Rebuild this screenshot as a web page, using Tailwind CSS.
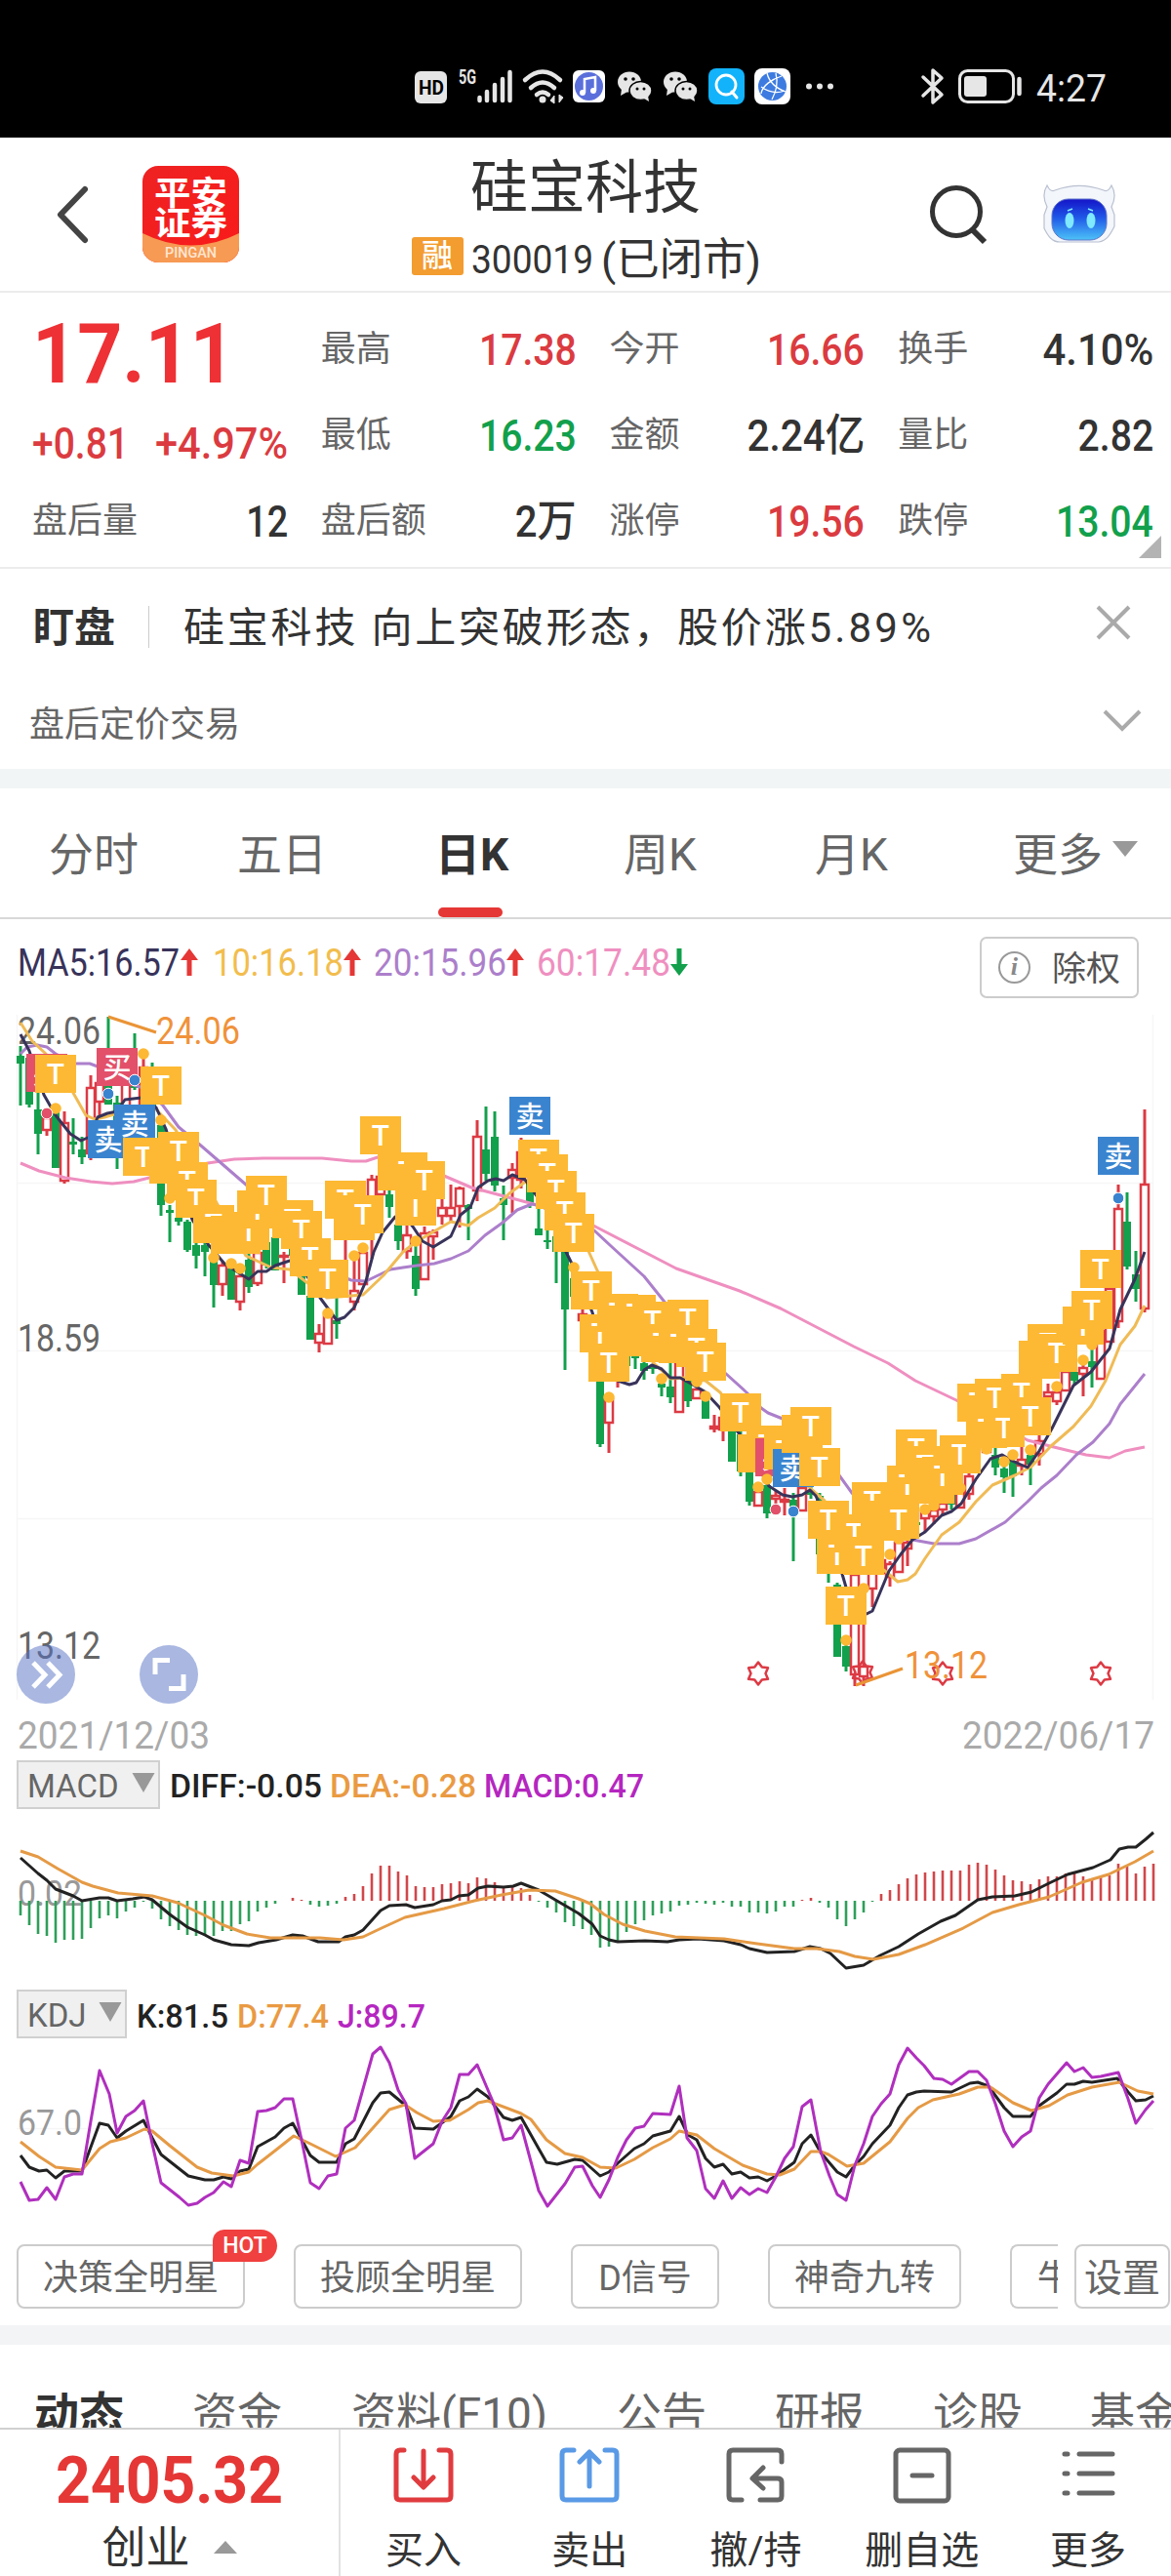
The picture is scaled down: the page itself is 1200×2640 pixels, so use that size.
<!DOCTYPE html>
<html lang="zh-CN">
<head>
    <meta charset="UTF-8">
    <meta name="viewport" content="width=device-width, initial-scale=1.0">
    <title>硅宝科技 300019</title>
    <script src="https://cdn.jsdelivr.net/npm/@tailwindcss/browser@4"></script>
</head>
<body class="bg-white text-[#333] font-['Roboto','Noto_Sans_CJK_SC',sans-serif] leading-none w-[1200px] h-[2640px] overflow-hidden flex flex-col">
    <!-- Status bar -->
    <div class="bg-black h-[141px] shrink-0">
        <svg class="block" width="1200" height="141" viewBox="0 0 1200 141" fill="none">
            <rect x="425" y="73" width="33" height="33" rx="6" fill="#e6e6e6"/>
            <text x="429" y="97" font-size="21" font-weight="700" fill="#000" textLength="26" lengthAdjust="spacingAndGlyphs">HD</text>
            <text x="470" y="86" font-size="20" font-weight="700" fill="#e6e6e6" textLength="18" lengthAdjust="spacingAndGlyphs">5G</text>
            <path d="M491.500 103v-3M499 103v-9M507 103v-16M515 103v-22M522.500 103v-29" stroke="#e6e6e6" stroke-width="4.500" stroke-linecap="round"/>
            <path d="M538 82q18 -17 36 0M544 90q12 -11 24 0M550 97q6 -5 12 0" stroke="#e6e6e6" stroke-width="4.500" stroke-linecap="round"/>
            <circle cx="556" cy="102" r="3.500" fill="#e6e6e6"/>
            <path d="M568 106v-8l-4 5zM573 97v8l4-5z" fill="#e6e6e6" stroke="#e6e6e6"/>
            <rect x="587" y="72" width="33" height="33" rx="6" fill="#fff"/>
            <circle cx="603.500" cy="88.500" r="14.500" fill="#5b6fdb"/>
            <path d="M599 95V81l11-2v14" stroke="#fff" stroke-width="2.500"/>
            <circle cx="597" cy="95" r="3" fill="#fff"/><circle cx="608" cy="93" r="3" fill="#fff"/>
            <g id="chat">
                <ellipse cx="645" cy="84" rx="12" ry="10.500" fill="#e6e6e6"/>
                <path d="M637 91l-1 7 7-4z" fill="#e6e6e6"/>
                <circle cx="641" cy="81" r="1.800" fill="#000"/><circle cx="649" cy="81" r="1.800" fill="#000"/>
                <ellipse cx="656.500" cy="93" rx="11.500" ry="9.500" fill="#e6e6e6" stroke="#000" stroke-width="1.500"/>
                <path d="M660 101l5 3-1-6z" fill="#e6e6e6"/>
                <circle cx="653" cy="91" r="1.500" fill="#000"/><circle cx="660" cy="91" r="1.500" fill="#000"/>
            </g>
            <use href="#chat" x="47"/>
            <rect x="726" y="70" width="37" height="37" rx="8" fill="#12b3fb"/>
            <circle cx="744" cy="87" r="10" stroke="#fff" stroke-width="2.800"/>
            <path d="M750 94l5 6" stroke="#fff" stroke-width="3" stroke-linecap="round"/>
            <rect x="773" y="70" width="37" height="37" rx="8" fill="#fff"/>
            <circle cx="791.500" cy="88.500" r="14.500" fill="#3d7be0"/>
            <path d="M786 75c2 8 8 15 19 19M801 78c-10 3-20 10-21 18M780 89c7 5 16 7 24 4M795 75c2 8 1 18-4 27" stroke="#fff" stroke-width="1.300"/>
            <circle cx="829" cy="88.500" r="3" fill="#e6e6e6"/><circle cx="840" cy="88.500" r="3" fill="#e6e6e6"/><circle cx="851" cy="88.500" r="3" fill="#e6e6e6"/>
            <path d="M946 79l19 18-9 8V72l9 8-19 18" stroke="#e6e6e6" stroke-width="3.500" stroke-linejoin="round" stroke-linecap="round"/>
            <rect x="983.500" y="72.500" width="55" height="32" rx="8" stroke="#e6e6e6" stroke-width="3"/>
            <rect x="988" y="78" width="23" height="21" rx="3" fill="#e6e6e6"/>
            <path d="M1044.500 81v15" stroke="#e6e6e6" stroke-width="4.500" stroke-linecap="round"/>
            <text x="1062" y="104" font-size="39" fill="#e6e6e6" textLength="72" lengthAdjust="spacingAndGlyphs">4:27</text>
        </svg>
    </div>

    <!-- Header -->
    <header class="h-[159px] shrink-0 border-b-2 border-[#ececec] flex items-center relative">
        <svg class="ml-[54px]" width="40" height="66" viewBox="0 0 40 66" fill="none"><path d="M33 7L8 33l25 26" stroke="#444" stroke-width="6" stroke-linecap="round" stroke-linejoin="round"/></svg>
        <div class="ml-[52px] w-[99px] h-[99px] rounded-[16px] overflow-hidden bg-gradient-to-br from-[#ee2222] to-[#fa1a1a] relative text-white text-center">
            <svg class="absolute inset-0" width="99" height="99" viewBox="0 0 99 99"><path d="M0 69Q50 94 99 69V99H0z" fill="#f79a53"/></svg>
            <svg class="relative block" width="99" height="99" viewBox="0 0 99 99" fill="#fff" font-weight="700">
                <text x="12" y="40" font-size="34" textLength="75" lengthAdjust="spacingAndGlyphs">平安</text>
                <text x="12" y="71" font-size="34" textLength="75" lengthAdjust="spacingAndGlyphs">证券</text>
                <text x="23" y="94" font-size="14" font-weight="500" fill="#ffe6d2" textLength="53" lengthAdjust="spacingAndGlyphs">PINGAN</text>
            </svg>
        </div>
        <div class="absolute inset-x-0 top-0 flex flex-col items-center pointer-events-none">
            <h1 class="mt-[20px] text-[59px] leading-[64px]">硅宝科技</h1>
            <div class="mt-[14px] flex items-center h-[46px]">
                <span class="w-[53px] h-[39px] rounded-[3px] bg-[#f39c2f] text-white text-[32px] leading-[39px] font-medium text-center">融</span>
                <svg class="ml-2 overflow-visible" width="296" height="46" viewBox="484 238 296 46" fill="#333">
                    <text x="484" y="279" font-size="40" textLength="125" lengthAdjust="spacingAndGlyphs">300019</text>
                    <text x="617" y="281" font-size="45" textLength="164" lengthAdjust="spacingAndGlyphs">(已闭市)</text>
                </svg>
            </div>
        </div>
        <div class="ml-auto flex items-center">
            <svg width="64" height="64" viewBox="0 0 64 64" fill="none"><circle cx="30" cy="29" r="24.500" stroke="#333" stroke-width="5"/><path d="M47 48l12 12" stroke="#333" stroke-width="6"/></svg>
            <svg class="ml-[54px] mr-[56px]" width="76" height="64" viewBox="0 0 76 64">
                <defs><linearGradient id="face" x1="0" y1="0" x2="0" y2="1"><stop offset="0" stop-color="#1414c8"/><stop offset=".45" stop-color="#1f57e8"/><stop offset="1" stop-color="#4cc3f7"/></linearGradient></defs>
                <path d="M5 2c2 4 4 7 8 5 16-6 34-6 50 0 4 2 6-1 8-5 5 8 3 16 0 22l3 8v12c-4 8-8 15-16 16H18C10 60 6 54 2 46V32l3-8C2 18 0 10 5 2z" fill="#f3f6fb" stroke="#b9c0d0" stroke-width="1.200"/>
                <rect x="10" y="16" width="56" height="42" rx="17" fill="url(#face)" stroke="#5f74c9"/>
                <ellipse cx="28" cy="38" rx="4.500" ry="8" fill="#7fe9ff"/><ellipse cx="50" cy="38" rx="4.500" ry="8" fill="#7fe9ff"/>
                <path d="M26 28l5-2M52 28l-5-2" stroke="#7fe9ff" stroke-width="1.500"/>
            </svg>
        </div>
    </header>

    <!-- Quote -->
    <section class="h-[283px] shrink-0 border-b-2 border-[#ececec] pt-[14px] pl-[33px] pr-[18px] grid grid-cols-4 gap-x-[34px] relative text-[36px] text-[#666]">
        <div>
            <svg class="block overflow-visible" width="262" height="176" viewBox="33 314 262 176" font-weight="500">
                <text x="33" y="392" font-size="86" font-weight="700" fill="#ee3135" textLength="208" lengthAdjust="spacingAndGlyphs">17.11</text>
                <g font-size="45" fill="#db3b40">
                    <text x="33" y="470" textLength="99" lengthAdjust="spacingAndGlyphs">+0.81</text>
                    <text x="159" y="470" textLength="136" lengthAdjust="spacingAndGlyphs">+4.97%</text>
                </g>
            </svg>
            <div class="h-[88px] flex items-center justify-between"><span>盘后量</span><b class="font-medium text-[45px] text-[#333] origin-right scale-x-[.84]">12</b></div>
        </div>
        <div>
            <div class="h-[88px] flex items-center justify-between"><span>最高</span><b class="font-medium text-[45px] text-[#db3b40] origin-right scale-x-[.87]">17.38</b></div>
            <div class="h-[88px] flex items-center justify-between"><span>最低</span><b class="font-medium text-[45px] text-[#12a04c] origin-right scale-x-[.87]">16.23</b></div>
            <div class="h-[88px] flex items-center justify-between"><span>盘后额</span><b class="font-medium text-[45px] text-[#333] origin-right scale-x-[.89]">2万</b></div>
        </div>
        <div>
            <div class="h-[88px] flex items-center justify-between"><span>今开</span><b class="font-medium text-[45px] text-[#db3b40] origin-right scale-x-[.87]">16.66</b></div>
            <div class="h-[88px] flex items-center justify-between"><span>金额</span><b class="font-medium text-[45px] text-[#333] origin-right scale-x-[.9]">2.24亿</b></div>
            <div class="h-[88px] flex items-center justify-between"><span>涨停</span><b class="font-medium text-[45px] text-[#db3b40] origin-right scale-x-[.87]">19.56</b></div>
        </div>
        <div>
            <div class="h-[88px] flex items-center justify-between"><span>换手</span><b class="font-medium text-[45px] text-[#333] origin-right scale-x-[.93]">4.10%</b></div>
            <div class="h-[88px] flex items-center justify-between"><span>量比</span><b class="font-medium text-[45px] text-[#333] origin-right scale-x-[.87]">2.82</b></div>
            <div class="h-[88px] flex items-center justify-between"><span>跌停</span><b class="font-medium text-[45px] text-[#12a04c] origin-right scale-x-[.87]">13.04</b></div>
        </div>
        <svg class="absolute right-[10px] bottom-[9px]" width="23" height="23" viewBox="0 0 23 23"><path d="M23 0v23H0z" fill="#b3b3b3"/></svg>
    </section>

    <!-- Alert -->
    <section class="h-[205px] shrink-0">
        <div class="h-[122px] pl-[34px] pr-[39px] flex items-center">
            <b class="text-[42px] font-bold">盯盘</b>
            <i class="ml-[34px] mb-1 w-px h-[43px] bg-[#ccc]"></i>
            <span class="ml-[35px] text-[42px] tracking-[2.8px] whitespace-nowrap">硅宝科技 向上突破形态，股价涨<span class="tracking-[3.200px]">5.89%</span></span>
            <svg class="ml-auto mb-[12px]" width="40" height="40" viewBox="0 0 40 40"><path d="M4 4l32 32M36 4L4 36" stroke="#aaa" stroke-width="4"/></svg>
        </div>
        <div class="h-[76px] pl-[30px] pr-[28px] flex items-center justify-between text-[36px] text-[#666]">
            <span>盘后定价交易</span>
            <svg class="mb-2" width="44" height="28" viewBox="0 0 44 28" fill="none"><path d="M4 4l18 18L40 4" stroke="#aaa" stroke-width="4"/></svg>
        </div>
    </section>
    <div class="h-5 shrink-0 bg-[#f2f5f6]"></div>

    <!-- Period tabs -->
    <nav class="h-[134px] shrink-0 border-b-2 border-[#d8d8d8] flex items-center text-[46px] text-[#666] pl-[50px] pt-1">
        <a class="w-[193px]">分时</a>
        <a class="w-[203px]">五日</a>
        <a class="w-[193px] h-full flex items-center font-bold text-[#333] relative">日K<i class="absolute left-[3px] bottom-0 w-[66px] h-[10px] rounded-[5px] bg-[#e53735]"></i></a>
        <a class="w-[196px]">周K</a>
        <a class="w-[203px]">月K</a>
        <a class="flex items-center">更多<svg class="ml-[10px] mb-3" width="26" height="16" viewBox="0 0 26 16"><path d="M0 0h26L13 16z" fill="#999"/></svg></a>
    </nav>

    <!-- Moving averages -->
    <div class="h-[94px] shrink-0 flex items-start">
        <svg class="block" width="720" height="94" viewBox="0 942 720 94" font-size="38">
            <text x="18" y="1000" fill="#38335a" textLength="166" lengthAdjust="spacingAndGlyphs">MA5:16.57</text>
            <text x="218" y="1000" fill="#f2bd4d" textLength="134" lengthAdjust="spacingAndGlyphs">10:16.18</text>
            <text x="383" y="1000" fill="#ac7fcb" textLength="136" lengthAdjust="spacingAndGlyphs">20:15.96</text>
            <text x="550" y="1000" fill="#ef8fc0" textLength="137" lengthAdjust="spacingAndGlyphs">60:17.48</text>
            <g fill="#e53735">
                <path id="up" d="M194 972l9 12h-6.500v16h-5v-16H185z"/>
                <use href="#up" x="167"/>
                <use href="#up" x="334"/>
            </g>
            <path d="M696 1000l9-12h-6.500v-16h-5v16H687z" fill="#12a04c"/>
        </svg>
        <div class="ml-[284px] mt-[18px] w-[163px] h-[63px] border-2 border-[#ccc] rounded-[7px] pt-[3px] flex items-center justify-center gap-[22px] text-[35px] text-[#555]">
            <span class="w-[33px] h-[33px] mb-1 rounded-full border-2 border-[#999] text-[#888] font-['Liberation_Serif',serif] italic font-bold text-[26px] flex items-center justify-center">i</span>除权
        </div>
    </div>

    <!-- Candles -->
    <div class="h-[710px] shrink-0">
        <svg id="kline" class="block" width="1200" height="710" viewBox="0 1036 1200 710" fill="none">
            <path d="M17.500 1040V1742M1181.500 1040V1742M17 1212.500H1181M17 1384.500H1181M17 1556.500H1181" stroke="#f6f6f6" stroke-width="1.500"/>
            <g font-size="38" fill="#666">
                <text x="18" y="1070" textLength="85" lengthAdjust="spacingAndGlyphs">24.06</text>
                <text x="18" y="1385" textLength="85" lengthAdjust="spacingAndGlyphs">18.59</text>
                <text x="18" y="1700" textLength="85" lengthAdjust="spacingAndGlyphs">13.12</text>
            </g>
            <g id="candles"></g>
            <g id="averages" stroke-width="3" stroke-linejoin="round"></g>
            <g id="stars" stroke="#dc3a44" stroke-width="2.500" stroke-linejoin="round"></g>
            <path d="M111 1042L160 1058M877 1727L925 1710" stroke="#ea9436" stroke-width="3"/>
            <g font-size="38" fill="#f0923a">
                <text x="160" y="1070" textLength="86" lengthAdjust="spacingAndGlyphs">24.06</text>
                <text x="927" y="1720" textLength="85" lengthAdjust="spacingAndGlyphs">13.12</text>
            </g>
            <g id="flags" fill="#fff" text-anchor="middle" font-weight="500"></g>
            <g id="dots"></g>
            <g fill="#5470c4" fill-opacity=".5"><circle cx="47" cy="1716" r="30"/><circle cx="173" cy="1716" r="30"/></g>
            <path d="M34 1704l12 12.500-12 12.500M49 1704l12 12.500-12 12.500M159 1716v-14.500h15M173 1730.500h15V1716" stroke="#fff" stroke-width="5"/>
        </svg>
    </div>
    <div class="h-[58px] shrink-0">
        <svg class="block" width="1200" height="58" viewBox="0 1746 1200 58" font-size="39" fill="#aaa">
            <text x="18" y="1792" textLength="197" lengthAdjust="spacingAndGlyphs">2021/12/03</text>
            <text x="986" y="1792" textLength="197" lengthAdjust="spacingAndGlyphs">2022/06/17</text>
        </svg>
    </div>

    <!-- MACD -->
    <div class="h-[50px] shrink-0 pl-[17px] flex">
        <div class="w-[147px] h-[50px] bg-[#f0f0f0] border-2 border-[#d0d0d0] flex items-center justify-between pl-[9px] pr-[3px] text-[#666]">
            <span class="text-[33px] pt-[3px]">MACD</span><svg class="mb-1" width="24" height="20" viewBox="0 0 23 20"><path d="M0 0h23L11.500 20z" fill="#999"/></svg>
        </div>
        <svg class="block" width="520" height="50" viewBox="164 1804 520 50" font-size="33" font-weight="500">
            <text x="174" y="1842" fill="#222" textLength="156" lengthAdjust="spacingAndGlyphs">DIFF:-0.05</text>
            <text x="338" y="1842" fill="#ea9a42" textLength="150" lengthAdjust="spacingAndGlyphs">DEA:-0.28</text>
            <text x="496" y="1842" fill="#b526c0" textLength="164" lengthAdjust="spacingAndGlyphs">MACD:0.47</text>
        </svg>
    </div>
    <div class="h-[185px] shrink-0">
        <svg class="block" width="1200" height="185" viewBox="0 1854 1200 185" fill="none" stroke-width="3" stroke-linejoin="round">
            <text x="18" y="1953" font-size="37" fill="#999" stroke="none" textLength="66" lengthAdjust="spacingAndGlyphs">0.02</text>
            <g id="macdBars" stroke-width="2.600"></g>
            <polyline stroke="#222" points="21,1904 39,1920 48,1927 57,1936 75,1943 84,1948 102,1945 111,1945 120,1948 136,1946 148,1944 156,1947 174,1962 192,1975 210,1983 219,1988 237,1993 255,1994 265,1991 283,1988 300,1983 310,1984 326,1990 347,1990 354,1985 363,1983 372,1978 390,1958 399,1953 416,1952 425,1955 444,1952 453,1948 462,1947 470,1943 480,1942 490,1935 500,1933 516,1934 526,1933 534,1930 552,1937 569,1947 593,1961 607,1972 615,1984 624,1988 633,1990 661,1989 684,1990 696,1988 715,1987 742,1989 759,1993 768,1997 786,2001 814,2000 830,1995 841,1997 851,2002 867,2017 885,2014 902,2004 921,1995 941,1982 964,1969 979,1963 1002,1947 1017,1944 1040,1943 1057,1939 1075,1930 1094,1921 1120,1914 1138,1906 1147,1895 1156,1893 1164,1893 1174,1885 1182,1878"/>
            <polyline stroke="#e59a45" points="21,1897 39,1903 59,1915 84,1929 95,1933 121,1940 156,1943 182,1950 210,1963 229,1973 253,1982 277,1986 328,1986 352,1988 372,1985 391,1976 415,1965 455,1956 486,1948 514,1942 542,1937 569,1938 593,1946 605,1951 619,1962 638,1972 661,1979 692,1985 742,1987 776,1992 814,1997 837,1997 860,2000 876,2005 895,2008 921,2003 948,1993 987,1976 1017,1960 1044,1952 1075,1944 1109,1929 1136,1921 1163,1908 1182,1897"/>
        </svg>
    </div>

    <!-- KDJ -->
    <div class="h-[50px] shrink-0 pl-[17px] flex">
        <div class="w-[113px] h-[50px] bg-[#f0f0f0] border-2 border-[#d0d0d0] flex items-center justify-between pl-[9px] pr-[3px] text-[#666]">
            <span class="text-[33px] pt-[3px]">KDJ</span><svg class="mb-1" width="24" height="20" viewBox="0 0 23 20"><path d="M0 0h23L11.500 20z" fill="#999"/></svg>
        </div>
        <svg class="block" width="320" height="50" viewBox="130 2039 320 50" font-size="33" font-weight="500">
            <text x="140" y="2078" fill="#222" textLength="94" lengthAdjust="spacingAndGlyphs">K:81.5</text>
            <text x="243" y="2078" fill="#ea9a42" textLength="94" lengthAdjust="spacingAndGlyphs">D:77.4</text>
            <text x="346" y="2078" fill="#b526c0" textLength="90" lengthAdjust="spacingAndGlyphs">J:89.7</text>
        </svg>
    </div>
    <div class="h-[190px] shrink-0">
        <svg class="block" width="1200" height="190" viewBox="0 2089 1200 190" fill="none" stroke-width="3" stroke-linejoin="round">
            <path d="M17 2181.500H1182" stroke="#f6f6f6" stroke-width="1.500"/>
            <text x="18" y="2188" font-size="37" fill="#999" stroke="none" textLength="66" lengthAdjust="spacingAndGlyphs">67.0</text>
            <polyline stroke="#222" points="21,2209 30,2221 40,2225 48,2224 57,2232 66,2225 84,2225 95,2195 102,2176 111,2178 120,2191 129,2184 147,2173 156,2191 165,2208 193,2230 210,2234 219,2234 229,2231 237,2233 246,2225 255,2223 264,2200 282,2190 291,2181 300,2176 318,2209 327,2216 345,2216 354,2197 363,2192 382,2155 390,2145 399,2144 416,2158 425,2181 444,2182 462,2169 471,2153 480,2149 489,2141 500,2149 516,2170 525,2173 534,2170 552,2202 560,2216 571,2218 589,2213 597,2214 615,2230 624,2226 633,2217 650,2202 660,2197 669,2189 687,2184 696,2169 705,2188 714,2193 723,2212 732,2221 741,2218 750,2228 759,2226 768,2232 777,2231 786,2235 795,2230 814,2216 822,2197 831,2188 841,2206 858,2226 867,2231 876,2219 885,2210 894,2197 912,2178 921,2160 930,2147 939,2144 947,2143 975,2144 994,2135 1002,2134 1013,2138 1029,2160 1038,2169 1056,2169 1065,2158 1083,2145 1093,2136 1101,2136 1110,2133 1119,2134 1145,2130 1156,2144 1164,2153 1174,2152 1182,2148"/>
            <polyline stroke="#e59a45" points="21,2195 40,2210 57,2221 84,2224 102,2202 113,2195 129,2191 148,2182 156,2184 174,2199 202,2221 217,2227 239,2230 255,2226 264,2218 282,2204 301,2189 316,2196 344,2210 364,2201 382,2181 399,2162 415,2157 427,2165 444,2174 461,2173 480,2162 490,2155 500,2153 534,2166 544,2172 560,2193 579,2207 597,2211 615,2221 631,2222 650,2213 669,2201 687,2192 696,2184 714,2188 732,2202 761,2219 786,2228 799,2229 814,2223 831,2205 841,2205 849,2208 868,2220 885,2217 912,2195 930,2171 941,2160 956,2152 983,2146 1002,2139 1015,2139 1038,2155 1057,2163 1075,2158 1094,2147 1119,2139 1147,2134 1166,2143 1182,2146"/>
            <polyline stroke="#b02fbe" points="21,2236 30,2255 39,2254 48,2242 57,2254 66,2231 75,2228 84,2228 93,2174 102,2122 112,2146 120,2186 129,2169 138,2163 147,2153 156,2197 165,2237 184,2252 193,2260 202,2258 210,2252 219,2247 229,2236 237,2241 246,2214 255,2217 264,2164 273,2163 282,2160 291,2151 300,2151 309,2193 318,2237 327,2243 336,2230 345,2228 354,2181 363,2173 382,2105 390,2098 399,2114 408,2142 416,2156 425,2212 444,2197 453,2174 462,2160 471,2126 480,2126 489,2116 506,2156 516,2193 525,2191 534,2178 552,2245 561,2261 579,2238 589,2221 597,2220 607,2240 615,2252 624,2234 633,2211 642,2193 651,2181 660,2179 669,2166 687,2167 696,2138 704,2191 714,2204 723,2243 732,2253 741,2235 750,2253 759,2242 768,2249 777,2243 786,2247 795,2231 804,2212 813,2200 822,2159 831,2152 841,2205 850,2230 858,2249 867,2255 876,2219 885,2197 894,2169 903,2156 912,2146 921,2116 930,2099 939,2109 947,2117 957,2130 966,2131 975,2136 993,2123 1002,2123 1011,2132 1020,2156 1029,2184 1038,2200 1047,2190 1056,2184 1065,2150 1074,2136 1093,2114 1101,2123 1110,2119 1119,2129 1128,2128 1146,2124 1156,2151 1164,2176 1174,2162 1182,2153"/>
        </svg>
    </div>

    <!-- Strategy buttons -->
    <div class="h-[104px] shrink-0 pt-[21px] pl-[17px] flex text-[36px] text-[#666] whitespace-nowrap">
        <div class="w-[1067px] flex gap-[50px]">
            <div class="w-[234px] h-[66px] shrink-0 border-2 border-[#ccc] rounded-[8px] pt-1 flex items-center justify-center relative">决策全明星
                <span class="absolute left-[199px] -top-[17px] w-[66px] h-[33px] bg-[#f0403f] rounded-[17px] rounded-bl-none rounded-tl-[12px] text-white text-[23px] font-medium flex items-center justify-center">HOT</span>
            </div>
            <div class="w-[234px] h-[66px] shrink-0 border-2 border-[#ccc] rounded-[8px] pt-1 flex items-center justify-center">投顾全明星</div>
            <div class="w-[152px] h-[66px] shrink-0 border-2 border-[#ccc] rounded-[8px] pt-1 flex items-center justify-center">D信号</div>
            <div class="w-[198px] h-[66px] shrink-0 border-2 border-[#ccc] rounded-[8px] pt-1 flex items-center justify-center">神奇九转</div>
            <div class="w-[49px] h-[66px] shrink-0 border-2 border-r-0 border-[#ccc] rounded-l-[8px] pt-1 flex items-center pl-[26px] overflow-hidden">牛</div>
        </div>
        <div class="ml-[17px] w-[98px] h-[66px] border-2 border-[#ccc] rounded-[8px] pt-1 flex items-center justify-center text-[39px]">设置</div>
    </div>
    <div class="h-5 shrink-0 bg-[#f2f4f6]"></div>

    <!-- News tabs -->
    <nav class="h-[85px] shrink-0 overflow-hidden pt-[48px] pl-[35px] flex text-[46px] text-[#666] whitespace-nowrap">
        <a class="w-[162px] shrink-0 font-bold text-[#333]">动态</a>
        <a class="w-[163px] shrink-0">资金</a>
        <a class="w-[272px] shrink-0">资料(F10)</a>
        <a class="w-[162px] shrink-0">公告</a>
        <a class="w-[162px] shrink-0">研报</a>
        <a class="w-[161px] shrink-0">诊股</a>
        <a class="shrink-0">基金</a>
    </nav>

    <!-- Trade bar -->
    <footer class="h-[152px] shrink-0 bg-white border-t-2 border-[#d0d0d0] flex text-[39px]">
        <div class="w-[349px] border-r-2 border-[#e2e2e2] flex flex-col items-center">
            <svg class="block" width="347" height="92" viewBox="0 2490 347 92"><text x="57" y="2565" font-size="66" font-weight="700" fill="#e53735" textLength="233" lengthAdjust="spacingAndGlyphs">2405.32</text></svg>
            <div class="mt-[7px] flex items-center text-[45px] leading-[46px]">创业<svg class="ml-[24px] mb-1" width="24" height="13" viewBox="0 0 24 13"><path d="M12 0l12 13H0z" fill="#999"/></svg></div>
        </div>
        <div class="flex-1 grid grid-cols-5 text-center">
            <div class="flex flex-col items-center">
                <svg class="mt-[15px]" width="66" height="62" viewBox="0 0 66 62" fill="none" stroke="#e03c3f" stroke-width="5" stroke-linecap="round" stroke-linejoin="round"><path d="M13 6H9q-4 0-4 4v43q0 4 4 4h48q4 0 4-4V10q0-4-4-4h-8M33 7v35M23 34l10 10 10-10"/></svg>
                <span class="mt-[28px]">买入</span>
            </div>
            <div class="flex flex-col items-center">
                <svg class="mt-[15px]" width="66" height="62" viewBox="0 0 66 62" fill="none" stroke="#5a9ae6" stroke-width="5" stroke-linecap="round" stroke-linejoin="round"><path d="M17 6H9q-4 0-4 4v43q0 4 4 4h48q4 0 4-4V10q0-4-4-4h-8M33 43V8M23 18L33 8l10 10"/></svg>
                <span class="mt-[28px]">卖出</span>
            </div>
            <div class="flex flex-col items-center">
                <svg class="mt-[15px]" width="66" height="62" viewBox="0 0 66 62" fill="none" stroke="#666" stroke-width="5" stroke-linecap="round" stroke-linejoin="round"><path d="M19 57H10q-4 0-4-4V10q0-4 4-4h46q4 0 4 4v8M38 57h18q4 0 4-4V39q0-4-4-4H31M41 24L30 35l11 10"/></svg>
                <span class="mt-[28px]">撤/持</span>
            </div>
            <div class="flex flex-col items-center">
                <svg class="mt-[15px]" width="66" height="62" viewBox="0 0 66 62" fill="none" stroke="#666" stroke-width="5" stroke-linecap="round"><rect x="6" y="6" width="54" height="52" rx="4"/><path d="M23 32h20"/></svg>
                <span class="mt-[28px]">删自选</span>
            </div>
            <div class="flex flex-col items-center">
                <svg class="mt-[15px]" width="66" height="62" viewBox="0 0 66 62" fill="none" stroke="#666" stroke-width="5" stroke-linecap="round"><path d="M9 10h3M24 10h34M9 30h3M24 30h34M9 50h3M24 50h34"/></svg>
                <span class="mt-[28px]">更多</span>
            </div>
        </div>
    </footer>

    <script>
        const RED = '#dc3a44', GREEN = '#12a04c';

        // one row per day: colour, high, body top, body bottom, low
        const candles = [
            ['g',1072,1082,1090,1133],['g',1080,1084,1132,1135],['g',1120,1137,1162,1183],['r',1135,1145,1159,1164],['g',1131,1132,1197,1197],
            ['r',1139,1150,1211,1213],['g',1146,1170,1173,1183],['g',1165,1178,1186,1193],['r',1102,1114,1183,1189],['r',1100,1109,1130,1145],
            ['g',1042,1077,1132,1132],['g',1123,1130,1180,1198],['r',1100,1110,1153,1153],['g',1059,1103,1115,1117],['r',1083,1093,1137,1140],
            ['g',1089,1100,1133,1133],['g',1150,1153,1235,1246],['g',1235,1240,1243,1273],['g',1245,1248,1252,1256],['g',1250,1252,1281,1283],
            ['g',1273,1276,1287,1300],['g',1273,1276,1283,1308],['g',1290,1293,1317,1340],['r',1293,1296,1317,1328],['g',1298,1300,1332,1332],
            ['r',1305,1307,1335,1343],['g',1285,1291,1319,1325],['r',1270,1283,1316,1318],['g',1265,1273,1297,1300],['g',1267,1268,1302,1302],
            ['r',1283,1286,1289,1315],['g',1280,1280,1287,1287],['g',1300,1307,1327,1327],['g',1325,1328,1373,1373],['r',1357,1366,1377,1386],
            ['r',1345,1348,1378,1378],['g',1330,1353,1357,1372],['r',1250,1253,1270,1291],['r',1287,1322,1335,1343],['r',1280,1283,1317,1317],
            ['r',1204,1208,1233,1290],['r',1200,1205,1225,1225],['g',1220,1224,1237,1248],['g',1253,1255,1272,1281],['r',1255,1265,1283,1290],
            ['g',1267,1287,1321,1328],['r',1257,1263,1312,1312],['r',1260,1262,1268,1291],['r',1229,1237,1247,1255],['r',1214,1237,1247,1253],
            ['r',1216,1217,1237,1258],['g',1234,1235,1239,1271],['r',1148,1164,1221,1231],['g',1134,1178,1203,1210],['g',1139,1165,1215,1221],
            ['g',1215,1228,1235,1271],['r',1192,1198,1208,1243],['r',1166,1180,1210,1218],['g',1200,1213,1233,1238],['g',1239,1259,1266,1266],
            ['g',1261,1271,1273,1280],['g',1267,1267,1283,1315],['g',1280,1280,1342,1404],['g',1300,1310,1329,1329],['r',1342,1346,1354,1355],
            ['r',1348,1350,1367,1367],['g',1387,1400,1480,1483],['r',1430,1433,1459,1489],['r',1395,1400,1415,1422],['g',1383,1383,1400,1403],
            ['g',1380,1385,1392,1403],['g',1393,1397,1405,1414],['g',1398,1400,1403,1408],['g',1413,1418,1422,1431],['g',1397,1421,1432,1438],
            ['r',1395,1397,1448,1448],['g',1405,1415,1436,1442],['r',1420,1423,1434,1434],['g',1430,1433,1454,1454],['r',1450,1461,1465,1468],
            ['r',1450,1452,1466,1477],['g',1460,1465,1498,1498],['g',1465,1470,1508,1513],['g',1505,1508,1539,1543],['r',1523,1528,1544,1544],
            ['g',1520,1522,1551,1556],['r',1527,1532,1537,1543],['r',1525,1536,1540,1553],['g',1530,1537,1547,1600],['r',1520,1524,1549,1549],
            ['g',1523,1527,1532,1536],['g',1530,1533,1593,1593],['g',1545,1547,1613,1622],['g',1622,1624,1698,1698],['g',1685,1687,1708,1713],
            ['r',1610,1613,1717,1728],['r',1663,1707,1719,1728],['r',1605,1608,1629,1647],['r',1595,1598,1613,1613],['r',1600,1602,1617,1626],
            ['r',1578,1580,1612,1612],['r',1573,1580,1588,1605],['g',1558,1560,1563,1563],['r',1545,1548,1557,1570],['r',1545,1547,1555,1562],
            ['r',1538,1540,1548,1553],['g',1526,1528,1542,1547],['r',1522,1526,1546,1546],['r',1508,1512,1532,1537],['r',1468,1470,1476,1478],
            ['r',1480,1484,1489,1490],['g',1483,1491,1504,1512],['g',1502,1505,1514,1530],['g',1495,1497,1513,1534],['r',1483,1495,1503,1512],
            ['g',1488,1491,1501,1522],['r',1468,1476,1491,1502],['r',1418,1426,1432,1445],['r',1424,1426,1437,1440],['r',1403,1405,1426,1426],
            ['g',1404,1406,1415,1419],['r',1395,1401,1409,1431],['g',1382,1395,1401,1422],['r',1361,1363,1414,1414],['r',1318,1320,1376,1376],
            ['r',1214,1238,1355,1361],['g',1222,1252,1298,1301],['g',1282,1306,1321,1334],['r',1137,1213,1342,1345]
        ];
        document.getElementById('candles').innerHTML = candles.map(([c, hi, top, bot, lo], i) => {
            const x = 21 + i * 9;
            return c === 'g'
                ? `<path d="M${x} ${hi}V${lo}" stroke="${GREEN}" stroke-width="3"/><rect x="${x - 4}" y="${top}" width="8" height="${bot - top}" fill="${GREEN}"/>`
                : `<path d="M${x} ${hi}V${top}M${x} ${bot}V${lo}" stroke="${RED}" stroke-width="3"/><rect x="${x - 4}" y="${top + 1}" width="8" height="${Math.max(bot - top - 2, 1)}" fill="#fff" stroke="${RED}" stroke-width="2.500"/>`;
        }).join('');

        const averages = {
            '#ef8fc0': '21,1192 40,1200 67,1207 93,1211 115,1213 137,1211 153,1207 213,1192 240,1188 270,1187 330,1187 360,1190 375,1190 387,1186 420,1192 455,1205 483,1217 547,1234 580,1246 610,1257 693,1300 758,1323 800,1341 875,1380 910,1397 938,1415 980,1435 1053,1476 1080,1483 1113,1491 1137,1494 1153,1487 1173,1483',
            '#ac7fcb': '21,1080 28,1073 38,1071 48,1073 57,1080 78,1090 92,1090 100,1093 137,1112 147,1115 167,1133 183,1155 207,1175 252,1214 300,1265 330,1300 360,1312 375,1313 400,1301 413,1299 427,1297 445,1295 462,1290 480,1282 497,1266 515,1253 530,1240 545,1234 560,1237 580,1240 610,1262 625,1276 660,1308 680,1333 743,1407 765,1427 780,1443 787,1448 802,1454 860,1512 873,1530 900,1562 935,1578 957,1582 983,1582 1000,1577 1030,1560 1053,1539 1067,1525 1083,1512 1103,1491 1120,1478 1137,1459 1148,1439 1173,1408',
            '#f0bb55': '21,1048 33,1067 47,1080 75,1120 88,1143 97,1147 107,1145 140,1135 160,1137 180,1158 215,1220 252,1287 278,1299 297,1301 335,1330 372,1327 393,1307 413,1283 426,1273 443,1263 462,1252 480,1256 490,1248 507,1238 522,1223 533,1215 540,1210 560,1215 603,1282 612,1302 640,1360 670,1397 687,1413 700,1412 723,1415 738,1427 770,1470 830,1525 845,1538 880,1590 907,1610 920,1621 930,1619 938,1613 948,1597 965,1573 983,1560 1000,1539 1017,1522 1040,1512 1057,1503 1077,1482 1100,1462 1118,1441 1133,1415 1148,1378 1163,1359 1173,1338',
            '#38335a': '21,1060 30,1077 45,1122 57,1143 72,1162 83,1169 92,1165 100,1145 110,1141 120,1139 128,1127 145,1125 160,1135 170,1157 197,1250 213,1275 230,1295 255,1311 264,1303 273,1303 282,1297 297,1292 310,1300 328,1330 345,1353 353,1350 363,1340 375,1313 383,1283 392,1263 405,1247 412,1243 423,1257 433,1272 444,1278 462,1267 472,1245 482,1237 490,1217 500,1210 508,1208 516,1210 525,1204 538,1209 560,1240 580,1283 587,1297 607,1345 620,1395 633,1415 645,1419 652,1417 660,1404 668,1399 678,1403 687,1412 697,1412 708,1418 722,1426 737,1442 758,1470 788,1523 802,1532 812,1534 822,1532 830,1527 836,1533 850,1565 863,1613 870,1637 879,1652 888,1654 894,1651 911,1610 923,1593 935,1578 948,1570 965,1553 975,1549 985,1541 1000,1516 1015,1495 1027,1491 1037,1497 1053,1504 1065,1487 1078,1464 1100,1420 1118,1406 1137,1382 1148,1342 1163,1311 1173,1283'
        };
        document.getElementById('averages').innerHTML = Object.entries(averages)
            .map(([color, pts]) => `<polyline points="${pts}" stroke="${color}"/>`).join('');

        // trade markers: T, 买, 卖
        const flagFill = { T: '#fdb933', '买': '#e2506a', '卖': '#3a84cf' };
        const flags = [
            [27,1080,'买'],[36,1081],[99,1074,'买'],[90,1148,'卖'],[117,1132,'卖'],[144,1093],[126,1166],[153,1174],[162,1160],[171,1191],[180,1209],
            [198,1235],[216,1246],[225,1246],[234,1242],[243,1220],[252,1205],[279,1230],[288,1241],[297,1269],[315,1291],[333,1210],[342,1232],[351,1225],
            [369,1144],[387,1181],[396,1181],[405,1217],[414,1190],[522,1124,'卖'],[531,1168],[540,1183],[549,1200],[558,1222],[567,1244],
            [585,1303],[594,1347],[603,1377],[612,1326],[621,1338],[630,1327],[639,1351],[648,1334],[657,1357],[684,1332],[675,1358],[693,1362],[702,1376],[738,1428],
            [756,1470],[765,1461],[774,1474,'买'],[783,1467],[792,1485,'卖'],[801,1450],[810,1442],[819,1484],
            [828,1538],[837,1574],[846,1626],[855,1552],[864,1575],[873,1519],[882,1538],[891,1540],[900,1538],[909,1502],[918,1465],[927,1482],[936,1502],[945,1493],[963,1471],
            [981,1418],[990,1445],[999,1413],[1008,1444],[1026,1408],[1035,1432],[1044,1374],[1053,1357],[1062,1367],[1089,1339],[1098,1323],[1107,1281],[1125,1165,'卖']
        ];
        document.getElementById('flags').innerHTML = flags.map(([x, y, t = 'T']) =>
            `<rect x="${x}" y="${y}" width="42" height="39" fill="${flagFill[t]}"/><text x="${x + 21}" y="${y + (t === 'T' ? 30 : 31)}" font-size="${t === 'T' ? 30 : 29}">${t}</text>`).join('');

        const dots = [
            [57,1136],[48,1141,'买'],[111,1121,'卖'],[138,1107,'卖'],[147,1080],[165,1148],[219,1289],[237,1295],[246,1300],[174,1228],[336,1346],[363,1287],[372,1279],
            [426,1272],[588,1299],[624,1432],[678,1413],[714,1416],[723,1431],[777,1524],[786,1516],[795,1547,'买'],[813,1549,'卖'],[867,1681],[912,1593],[885,1628],[921,1577],
            [948,1547],[957,1543],[984,1525],[1011,1485],[1029,1498],[1038,1491],[1056,1486],[1083,1421],[1110,1394],[1119,1378],[1146,1228,'卖']
        ];
        document.getElementById('dots').innerHTML = dots.map(([x, y, t = 'T']) =>
            `<circle cx="${x}" cy="${y}" r="5.800" fill="${flagFill[t]}" ${t === 'T' ? '' : 'stroke="#fff"'}/>`).join('');

        // event stars
        document.getElementById('stars').innerHTML = [[777,1715],[884,1714],[966,1715],[1128,1715]].map(([cx, cy]) => {
            const pts = [];
            for (let k = 0; k < 12; k++) {
                const r = k % 2 ? 7.500 : 11.500, a = Math.PI / 6 * k;
                pts.push((cx + r * Math.sin(a)).toFixed(1) + ',' + (cy - r * Math.cos(a)).toFixed(1));
            }
            return `<polygon points="${pts.join(' ')}"/>`;
        }).join('');

        const macd = [
            -15,-25,-34,-36,-43,-40,-40,-39,-28,-18,-15,-18,-11,-7,-1,-8,-19,-26,-30,-35,-36,-36,-36,-31,-31,-24,-21,-11,-7,-3,0,3,1,-4,-6,-5,-3,4,7,15,28,36,36,
            30,26,15,14,14,17,18,20,18,24,23,19,15,14,13,6,-1,-7,-12,-22,-26,-29,-35,-48,-47,-41,-32,-24,-20,-15,-13,-11,-5,-4,-2,-3,-4,-2,-6,-6,-12,-12,-13,-11,
            -6,-6,1,3,-2,-7,-19,-26,-19,-12,-1,7,11,17,23,27,29,30,31,31,31,37,39,37,32,26,21,20,17,22,25,25,28,29,25,22,24,26,38,35,28,35,38
        ];
        document.getElementById('macdBars').innerHTML = macd.map((v, i) =>
            `<path d="M${21 + i * 9} 1948v${-v}" stroke="${v > 0 ? '#d0474b' : '#2f9f5a'}"/>`).join('');
    </script>
</body>
</html>
